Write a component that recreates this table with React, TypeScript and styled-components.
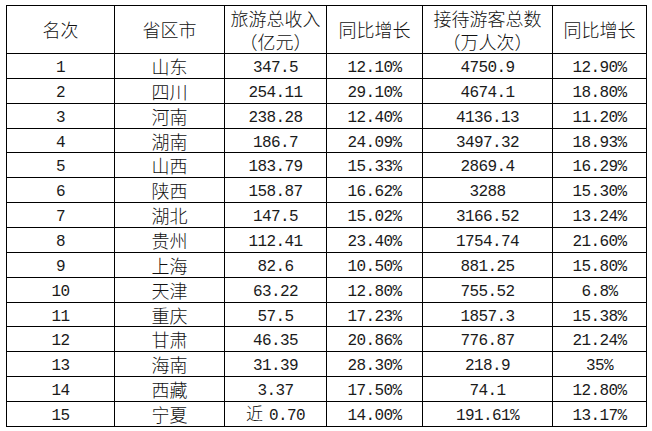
import React from 'react';
import styled, { createGlobalStyle } from 'styled-components';

const GlobalStyle = createGlobalStyle`
  html, body {
    margin: 0;
    padding: 0;
    background: #ffffff;
  }
  body {
    font-family: "Noto Sans CJK SC", "Liberation Serif", serif;
    color: #000;
  }
`;

const Page = styled.div`
  padding: 5px 6px;
`;

const Table = styled.table`
  border-collapse: collapse;
  table-layout: fixed;
  width: 641px;
`;

const HeadCell = styled.th`
  border: 1px solid #000;
  height: 47px;
  padding: 0;
  font-weight: 300;
  font-size: 18px;
  line-height: 23px;
  text-align: center;
  vertical-align: middle;
  color: #111;
  text-spacing-trim: space-all;
`;

const Cell = styled.td`
  border: 1px solid #000;
  height: 23.87px;
  padding: 0;
  font-weight: 300;
  font-size: 18px;
  line-height: 18px;
  text-align: center;
  vertical-align: middle;
  white-space: nowrap;
  color: #111;
`;

const Num = styled.span`
  font-family: "Liberation Mono", "Noto Sans CJK SC", monospace;
  font-size: 16px;
  line-height: 18px;
  letter-spacing: -0.6px;
  font-weight: 400;
  color: #1a1a1a;
`;

const Prefix = styled.span`
  font-size: 17px;
  margin-right: 6px;
`;

const widths = [108, 110, 102, 96, 130, 94];

type Row = [string, string, string, string, string, string];

const rows: Row[] = [
  ['1', '山东', '347.5', '12.10%', '4750.9', '12.90%'],
  ['2', '四川', '254.11', '29.10%', '4674.1', '18.80%'],
  ['3', '河南', '238.28', '12.40%', '4136.13', '11.20%'],
  ['4', '湖南', '186.7', '24.09%', '3497.32', '18.93%'],
  ['5', '山西', '183.79', '15.33%', '2869.4', '16.29%'],
  ['6', '陕西', '158.87', '16.62%', '3288', '15.30%'],
  ['7', '湖北', '147.5', '15.02%', '3166.52', '13.24%'],
  ['8', '贵州', '112.41', '23.40%', '1754.74', '21.60%'],
  ['9', '上海', '82.6', '10.50%', '881.25', '15.80%'],
  ['10', '天津', '63.22', '12.80%', '755.52', '6.8%'],
  ['11', '重庆', '57.5', '17.23%', '1857.3', '15.38%'],
  ['12', '甘肃', '46.35', '20.86%', '776.87', '21.24%'],
  ['13', '海南', '31.39', '28.30%', '218.9', '35%'],
  ['14', '西藏', '3.37', '17.50%', '74.1', '12.80%'],
  ['15', '宁夏', '近0.70', '14.00%', '191.61%', '13.17%'],
];

const renderValue = (v: string) => {
  if (v.startsWith('近')) {
    return (
      <>
        <Prefix>近</Prefix>
        <Num>{v.slice(1)}</Num>
      </>
    );
  }
  return <Num>{v}</Num>;
};

export default function App() {
  return (
    <Page>
      <GlobalStyle />
      <Table>
        <colgroup>
          {widths.map((w, i) => (
            <col key={i} style={{ width: w }} />
          ))}
        </colgroup>
        <thead>
          <tr>
            <HeadCell>名次</HeadCell>
            <HeadCell>省区市</HeadCell>
            <HeadCell>
              旅游总收入
              <br />
              （亿元）
            </HeadCell>
            <HeadCell>同比增长</HeadCell>
            <HeadCell>
              接待游客总数
              <br />
              （万人次）
            </HeadCell>
            <HeadCell>同比增长</HeadCell>
          </tr>
        </thead>
        <tbody>
          {rows.map((r) => (
            <tr key={r[0]}>
              <Cell>{renderValue(r[0])}</Cell>
              <Cell>{r[1]}</Cell>
              <Cell>{renderValue(r[2])}</Cell>
              <Cell>{renderValue(r[3])}</Cell>
              <Cell>{renderValue(r[4])}</Cell>
              <Cell>{renderValue(r[5])}</Cell>
            </tr>
          ))}
        </tbody>
      </Table>
    </Page>
  );
}
